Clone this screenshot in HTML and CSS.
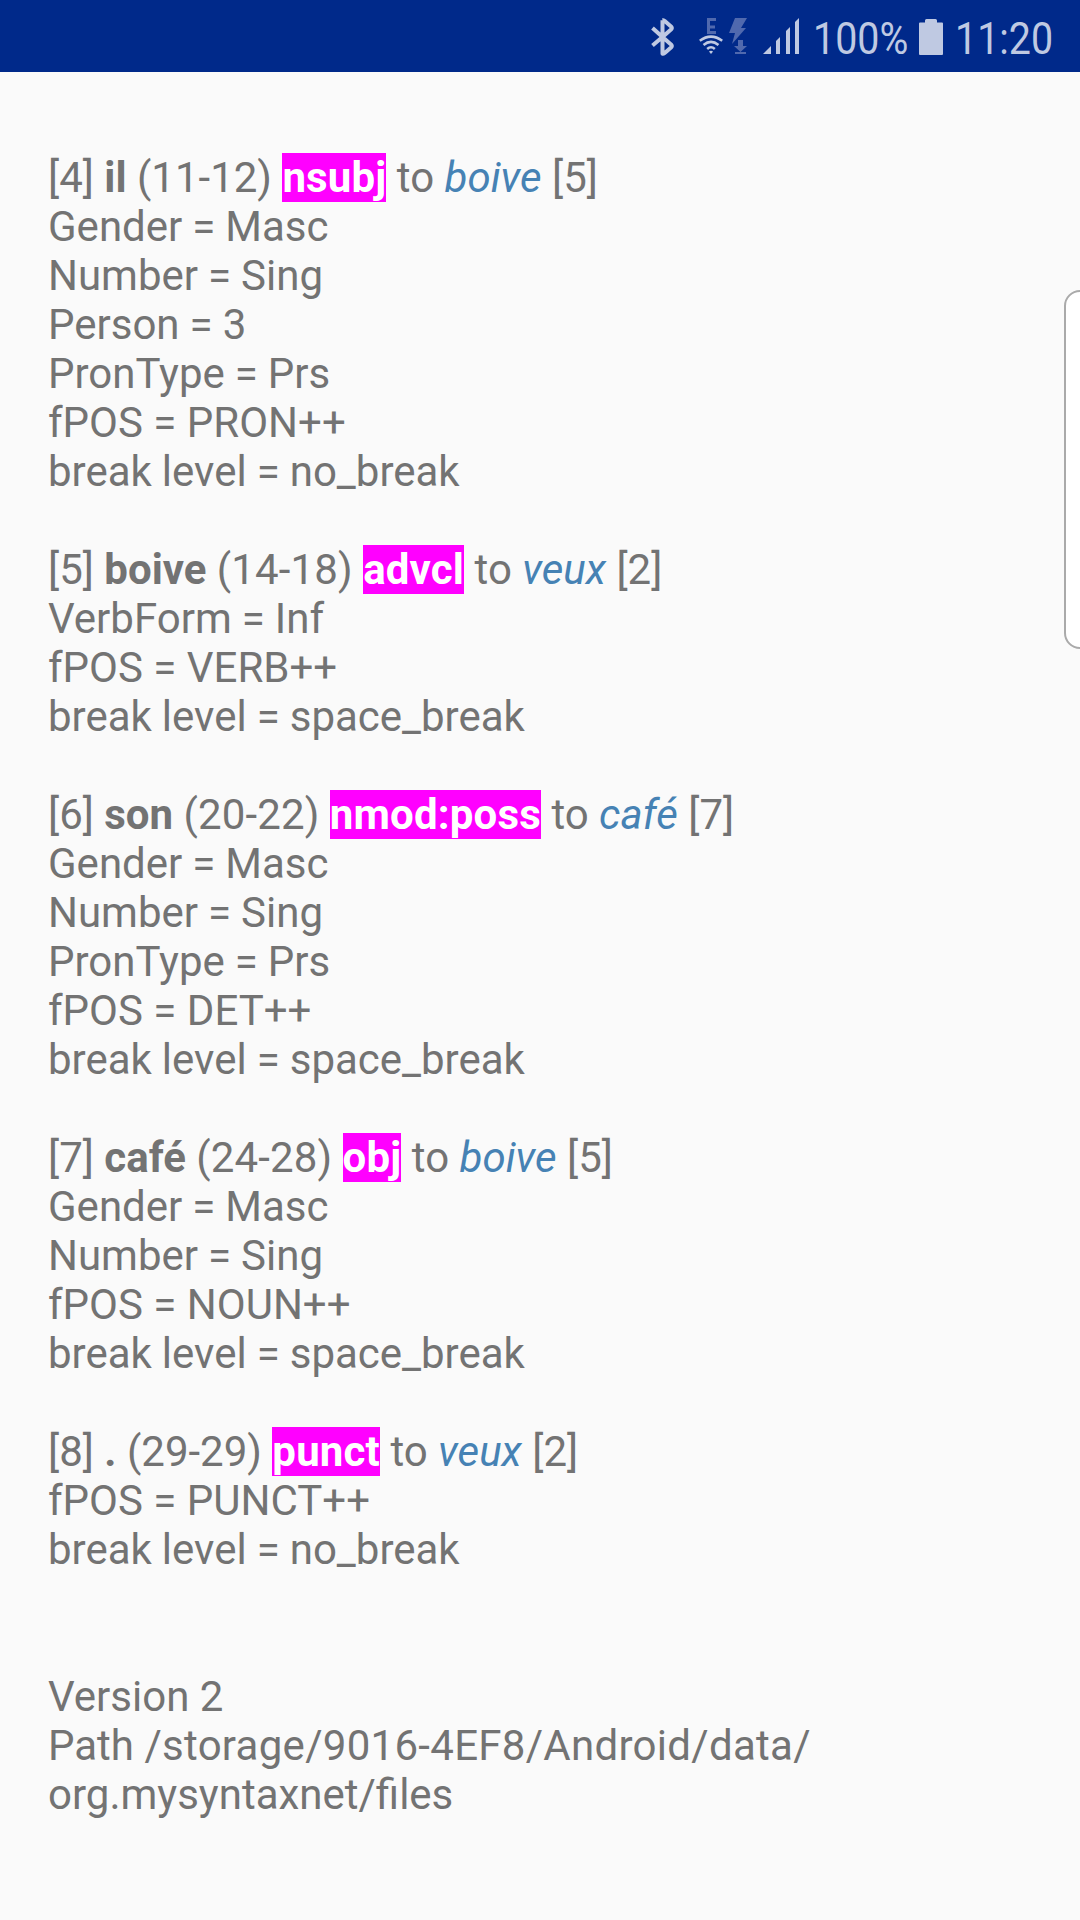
FILE: index.html
```html
<!DOCTYPE html>
<html lang="en">
<head>
<meta charset="utf-8">
<title>Syntax tokens</title>
<link rel="stylesheet" href="styles.css">
</head>
<body>
<header class="status">
<svg class="bluetooth" viewBox="0 0 24 38"><path d="M1.500 10 11.500 19 1.500 27.500M11.500 2.300V35.700Q13 36 14 34.800L20 29.500Q21.500 28 20 26.500L11.500 19 20 11.500Q21.500 10 20 8.500L14 3.200Q13 2 11.500 2.300" fill="none" stroke="currentColor" stroke-width="4" stroke-linejoin="round"/></svg>
<svg class="network" viewBox="0 0 50 38">
<g fill="#5069ae"><path d="M8 0h9v3h-6v4.500h5V10.500h-5V13h6v3H8zM36 0h12l-6 10h5L33 26l3-11h-6zM39 22h5v6h4l-6.500 6-6.500-6h4zM36 34h11v2H36z"/></g>
<g fill="none" stroke="currentColor" stroke-width="2.500"><path d="M.8 22.800Q12 14.500 23.200 22.800M4.500 27Q12 20.700 19.500 27M8.200 31Q12 27.500 15.800 31"/></g><path d="M10 33.500Q12 32 14 33.500L12 36z" fill="currentColor"/>
</svg>
<svg class="signal" viewBox="0 0 36 36"><path d="M0 36 8 28v8zM13 23l4-4v17h-4zM23 13l4-4v27h-4zM32 4l4-4v36h-4z" fill="currentColor"/></svg>
<span class="percent"><span class="narrow">100%</span></span>
<svg class="battery" viewBox="0 0 24 36"><path d="M7.500 0h9Q18 0 18 1.500V3.500h5Q24 3.500 24 4.500V35Q24 36 23 36H1Q0 36 0 35V4.500Q0 3.500 1 3.500h5V1.500Q6 0 7.500 0z" fill="currentColor"/></svg>
<span class="time"><span class="narrow">11:20</span></span>
</header>
<main class="content">
<p>[4] <b>il</b> (11-12) <mark>nsubj</mark> to <i>boive</i> [5]<br><span class="feature">Gender = Masc<br>Number = Sing<br>Person = 3<br>PronType = Prs</span><br>fPOS = PRON++<br><span class="feature">break level = no_break</span></p>
<p>[5] <b>boive</b> <span class="range">(14-18)</span> <mark>advcl</mark> to <i>veux</i> [2]<br><span class="feature">VerbForm = Inf</span><br>fPOS = VERB++<br><span class="feature">break level = space_break</span></p>
<p>[6] <b>son</b> <span class="range">(20-22)</span> <mark>nmod:poss</mark> to <i>café</i> [7]<br><span class="feature">Gender = Masc<br>Number = Sing<br>PronType = Prs</span><br>fPOS = DET++<br><span class="feature">break level = space_break</span></p>
<p>[7] <b>café</b> <span class="range">(24-28)</span> <mark>obj</mark> to <i>boive</i> [5]<br><span class="feature">Gender = Masc<br>Number = Sing</span><br>fPOS = NOUN++<br><span class="feature">break level = space_break</span></p>
<p>[8] <b>.</b> (29-29) <mark>punct</mark> to <i>veux</i> [2]<br>fPOS = PUNCT++<br><span class="feature">break level = no_break</span></p>
<p class="info">Version 2<br>Path <span class="path">/storage/9016-4EF8/Android/data/</span><br>org.mysyntaxnet/files</p>
</main>
<div class="edge"></div>
</body>
</html>
```
FILE: styles.css
```css
body{margin:0;height:1920px;background:#fafafa;font-family:Roboto,sans-serif;overflow:hidden;position:relative}
.status{height:72px;background:#00298a;color:#bfc9e2;display:flex;align-items:flex-start;padding:18px 0 0 651px;box-sizing:border-box;font-size:45px;line-height:42px}
.status svg{flex:none}
.bluetooth{width:24px;height:38px}
.network{width:50px;height:38px;margin-left:24px}
.signal{width:36px;height:36px;margin-left:14px}
.percent{width:96px;margin-left:14px}
.battery{width:24px;height:36px;margin:1px 0 0 10px}
.time{width:104px;margin-left:12px}
.narrow{display:inline-block;transform:scaleX(.875);transform-origin:left;white-space:nowrap}
.content{padding:81px 48px;color:#737373;font-size:42px;line-height:49px}
p{margin:0 0 49px}
.info{margin-top:98px}
.range{letter-spacing:.12px}
.feature{word-spacing:-.4px}
.path{letter-spacing:.29px}
mark{background:#f0f;color:#fff;font-weight:700;letter-spacing:.17px}
i{color:#4682b4}
.edge{position:absolute;left:1064px;top:290px;width:30px;height:355px;border:2px solid #aaa;border-radius:16px;background:#fff}
```
